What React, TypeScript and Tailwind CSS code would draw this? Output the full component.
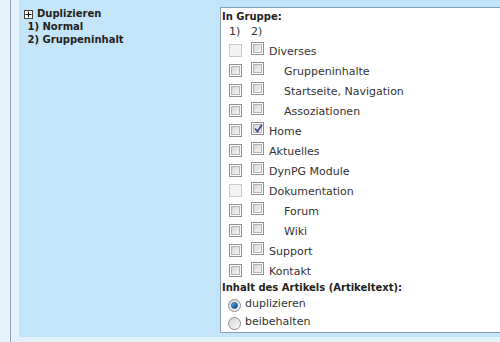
import React from 'react'

type Row = { label: string; indent?: boolean; first?: 'disabled' | 'normal'; checked?: boolean }

const rows: Row[] = [
  { label: 'Diverses', first: 'disabled' },
  { label: 'Gruppeninhalte', indent: true },
  { label: 'Startseite, Navigation', indent: true },
  { label: 'Assoziationen', indent: true },
  { label: 'Home', checked: true },
  { label: 'Aktuelles' },
  { label: 'DynPG Module' },
  { label: 'Dokumentation', first: 'disabled' },
  { label: 'Forum', indent: true },
  { label: 'Wiki', indent: true },
  { label: 'Support' },
  { label: 'Kontakt' },
]

function Checkbox({ disabled, checked }: { disabled?: boolean; checked?: boolean }) {
  if (disabled) {
    return <span className="block w-[13px] h-[13px] border border-[#c9c9c9] bg-[#f3f3f3]" />
  }
  return (
    <span className="relative block w-[13px] h-[13px] border border-[#8f8f8f] bg-white p-px">
      <span className="block w-full h-full border border-[#b4b4b4] bg-gradient-to-br from-[#d6d6d6] to-[#f6f6f6]" />
      {checked && (
        <svg className="absolute left-[1px] top-[0px]" width="11" height="11" viewBox="0 0 11 11">
          <path d="M2 5.5 L4.5 8.5 L9 1.5" fill="none" stroke="#3e4f94" strokeWidth="1.8" />
        </svg>
      )}
    </span>
  )
}

function Radio({ checked }: { checked?: boolean }) {
  return (
    <span className="flex items-center justify-center w-[13px] h-[13px] rounded-full border border-[#8e8e8e] bg-gradient-to-br from-[#d4d4d4] to-[#fbfbfb]">
      {checked && (
        <span className="block w-[7px] h-[7px] rounded-full bg-gradient-to-br from-[#7ec3ef] via-[#1c78c0] to-[#0d4f8a] border border-[#1a5a93]" />
      )}
    </span>
  )
}

export default function App() {
  return (
    <div className="w-[500px] h-[342px] overflow-hidden bg-[#e4f2fb] pl-[10px] font-['DejaVu_Sans',sans-serif]">
      <div className="h-full border-l border-[#8ea6c2] pl-[8px]">
        <div className="flex h-[337px] bg-[#c4e5f9]">
          <div className="w-[201px] shrink-0 pl-[5px] pt-[8px] text-[10px] leading-[12px] font-bold text-[#222]">
            <div className="flex items-center">
              <span className="flex items-center justify-center w-[9px] h-[9px] border border-[#444] bg-white mr-[4px]">
                <svg width="7" height="7" viewBox="0 0 7 7">
                  <path d="M0.5 3.5 H6.5 M3.5 0.5 V6.5" stroke="#111" strokeWidth="1" />
                </svg>
              </span>
              <span>Duplizieren</span>
            </div>
            <div className="whitespace-pre mt-px"> 1) Normal</div>
            <div className="whitespace-pre mt-px"> 2) Gruppeninhalt</div>
          </div>

          <div className="mt-[7px] h-[326px] flex-1 border border-r-0 border-[#8aa0b8] bg-white pl-px pt-[2px] text-[#333]">
            <div className="text-[10px] leading-[13px] font-bold text-[#222]">In Gruppe:</div>
            <div className="mt-[2px] flex pl-[7px] text-[11px] leading-[14px]">
              <span className="w-[22px]">1)</span>
              <span>2)</span>
            </div>
            <div className="mt-[3px]">
              {rows.map((r) => (
                <div key={r.label} className="flex items-start h-[20px] pl-[7px] text-[11px] leading-[14px]">
                  <span className="mt-[2px]">
                    <Checkbox disabled={r.first === 'disabled'} />
                  </span>
                  <span className="ml-[9px]">
                    <Checkbox checked={r.checked} />
                  </span>
                  <span className={`mt-[3px] ${r.indent ? 'ml-[20px]' : 'ml-[5px]'}`}>{r.label}</span>
                </div>
              ))}
            </div>
            <div className="-mt-px text-[10px] leading-[13px] font-bold text-[#222]">
              Inhalt des Artikels (Artikeltext):
            </div>
            <div className="mt-px">
              <div className="flex items-start h-[18px] pl-[6px] text-[11px] leading-[14px]">
                <span className="mt-[4px]">
                  <Radio checked />
                </span>
                <span className="ml-[4px] mt-[2px]">duplizieren</span>
              </div>
              <div className="flex items-start h-[18px] pl-[6px] text-[11px] leading-[14px]">
                <span className="mt-[4px]">
                  <Radio />
                </span>
                <span className="ml-[4px] mt-[2px]">beibehalten</span>
              </div>
            </div>
          </div>
        </div>
      </div>
    </div>
  )
}
